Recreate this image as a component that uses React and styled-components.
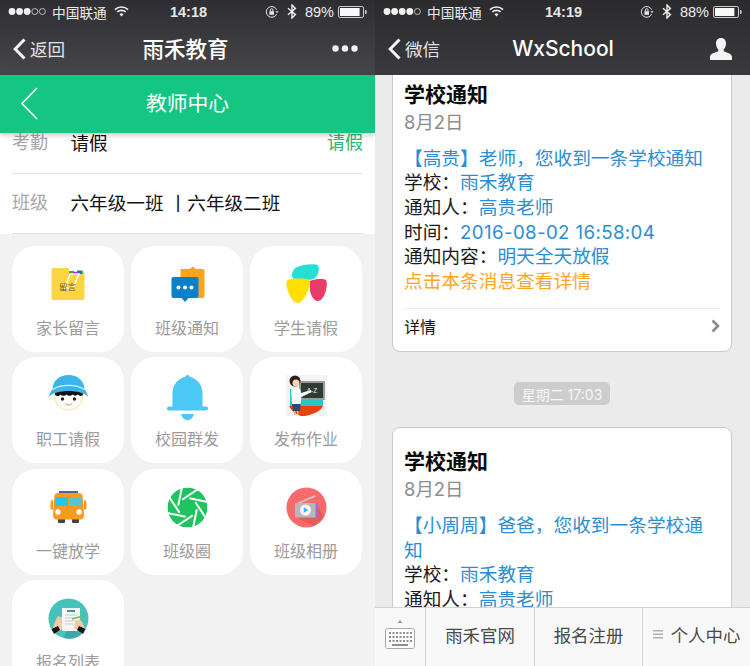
import React from "react";
import styled, { createGlobalStyle } from "styled-components";

const CJK = `"Noto Sans CJK SC", sans-serif`;
const MIXED = `Inter, "Noto Sans CJK SC", sans-serif`;

const GlobalStyle = createGlobalStyle`
  html, body {
    margin: 0;
    padding: 0;
    background: #fff;
  }
  #root {
    width: 750px;
    height: 666px;
    overflow: hidden;
  }
  * {
    box-sizing: border-box;
  }
`;

const Page = styled.div`
  display: grid;
  grid-template-columns: 375px 375px;
  width: 750px;
  height: 666px;
  font-family: ${MIXED};
`;

const Phone = styled.section`
  display: flex;
  flex-direction: column;
  height: 666px;
  overflow: hidden;
  background: ${(p) => p.$bg};
`;

/* ---------- top of the phones ---------- */

const Header = styled.header`
  flex: none;
  height: 75px;
  color: #fff;
  background: linear-gradient(${(p) => p.$from}, ${(p) => p.$to});
`;

const StatusBar = styled.div`
  display: grid;
  grid-template-columns: 1fr auto 1fr;
  align-items: center;
  height: 25px;
  padding: 0 8px 2px;
  color: #eee;
`;

const StatusLeft = styled.div`
  display: flex;
  align-items: center;
`;

const StatusRight = styled.div`
  display: flex;
  align-items: center;
  justify-content: flex-end;
`;

const Carrier = styled.span`
  margin: 0 7px 0 6px;
  font-family: ${CJK};
  font-size: 13.7px;
  line-height: 20px;
`;

const Clock = styled.span`
  margin-left: 2px;
  font-family: "Liberation Sans", sans-serif;
  font-size: 14.5px;
  font-weight: 700;
  color: #e8e8e8;
`;

const Percent = styled.span`
  margin: 0 4px 0 8px;
  font-family: "Liberation Sans", sans-serif;
  font-size: 14.5px;
`;

const NavBar = styled.div`
  display: grid;
  grid-template-columns: 1fr auto 1fr;
  align-items: center;
  height: 50px;
  padding: 0 17px 3px 13px;
`;

const Back = styled.div`
  display: flex;
  align-items: center;
  gap: 4px;
  font-family: ${CJK};
  font-size: 17.6px;
  line-height: 24px;
  color: #e4e4e4;
`;

const NavTitle = styled.div`
  margin: ${(p) => (p.$latin ? "0 0 0 5px" : "0 0 3px 0")};
  font-family: ${(p) => (p.$latin ? `Inter, sans-serif` : CJK)};
  font-size: ${(p) => (p.$latin ? "21px" : "21.5px")};
  font-weight: 500;
  color: #fff;
`;

const NavAction = styled.div`
  display: flex;
  justify-content: flex-end;
`;

/* ---------- teacher centre ---------- */

const GreenBar = styled.div`
  position: relative;
  z-index: 2;
  flex: none;
  display: flex;
  align-items: center;
  justify-content: center;
  height: 58px;
  padding-bottom: 4px;
  font-family: ${CJK};
  font-size: 20.8px;
  color: #fff;
  background: #15c682;
  box-shadow: 0 2px 6px rgba(0, 0, 0, 0.22);
`;

const GreenBack = styled.svg`
  position: absolute;
  left: 20px;
  top: 12px;
`;

const Scroller = styled.div`
  flex: 1;
  min-height: 0;
  overflow: hidden;
`;

const InfoPanel = styled.div`
  margin-top: -19px;
  padding: 0 12px;
  background: #fff;
`;

const InfoRow = styled.div`
  display: flex;
  align-items: center;
  height: 60px;
  padding-bottom: 5px;
  border-bottom: 1px solid #e3e3e3;
  font-family: ${MIXED};
  font-size: 18.6px;
  color: #111;
`;

const InfoLabel = styled.span`
  flex: none;
  width: 58.5px;
  font-size: 18px;
  color: #a6a6a6;
`;

const InfoAction = styled.span`
  margin-left: auto;
  font-size: 18px;
  color: #2cb673;
`;

const TileGrid = styled.div`
  display: grid;
  grid-template-columns: repeat(3, 112px);
  grid-auto-rows: 106px;
  column-gap: 7px;
  row-gap: 5.5px;
  padding: 11.5px 0 0 12px;
`;

const Tile = styled.div`
  display: flex;
  flex-direction: column;
  align-items: center;
  gap: 11px;
  padding-top: 18px;
  border-radius: 24px;
  background: #fff;
`;

const TileIcon = styled.svg`
  flex: none;
  overflow: visible;
`;

const TileLabel = styled.span`
  font-family: ${CJK};
  font-size: 16px;
  line-height: 22px;
  color: #9b9b9b;
`;

/* ---------- message list ---------- */

const Messages = styled.div`
  display: flex;
  flex-direction: column;
  align-items: flex-start;
  padding-left: 17px;
  margin-top: -15px;
`;

const Card = styled.article`
  flex: none;
  width: 340px;
  padding: 19px 11px 0;
  border: 1px solid #c9c9c9;
  border-radius: 8px;
  background: #fff;
`;

const CardTitle = styled.h2`
  margin: 0 0 2px;
  font-family: ${CJK};
  font-size: 21px;
  font-weight: 700;
  line-height: 26px;
  color: #0a0a0a;
`;

const CardDate = styled.div`
  margin-bottom: 10.8px;
  font-size: 18.4px;
  line-height: 28px;
  color: #8c8c8c;
`;

const Line = styled.p`
  margin: 0;
  width: 316px;
  font-size: 18.7px;
  line-height: 24.6px;
  color: ${(p) => p.$color || "#1a1a1a"};
`;

const Blue = styled.span`
  color: #2b8ed2;
  letter-spacing: ${(p) => (p.$wide ? "0.37px" : "0")};
`;

const CardFooter = styled.div`
  display: flex;
  align-items: center;
  justify-content: space-between;
  height: 43px;
  margin-top: 14px;
  padding-bottom: 8px;
  border-top: 1px solid #e8e8e8;
  font-family: ${CJK};
  font-size: 16px;
  color: #111;
`;

const TimePill = styled.div`
  align-self: flex-start;
  display: flex;
  align-items: center;
  justify-content: center;
  width: 96px;
  height: 23px;
  margin: 30px 0 22px 122px;
  border-radius: 5px;
  font-size: 14px;
  color: #f6f6f6;
  background: #cdcdcd;
`;

const MenuBar = styled.nav`
  flex: none;
  display: grid;
  grid-template-columns: 50px 109px 108px 108px;
  height: 59px;
  border-top: 1px solid #d2d2d2;
  background: #f8f8f8;
`;

const MenuCell = styled.div`
  display: flex;
  align-items: center;
  justify-content: center;
  gap: 8px;
  padding-bottom: 5px;
  border-left: ${(p) => (p.$first ? "none" : "1px solid #d4d4d4")};
  font-family: ${CJK};
  font-size: 17.4px;
  color: #4a4a4a;
`;

const MenuLines = styled.svg`
  flex: none;
`;

/* ---------- drawn icons ---------- */

const SignalDots = ({ filled }) => (
  <svg width="38" height="9" viewBox="0 0 38 9">
    {[0, 1, 2, 3, 4].map((i) => (
      <circle
        key={i}
        cx={4 + i * 7.6}
        cy="4.5"
        r={i < filled ? 3.4 : 3}
        fill={i < filled ? "#f2f2f2" : "none"}
        stroke="#dcdcdc"
        strokeWidth={i < filled ? 0 : 0.8}
      />
    ))}
  </svg>
);

const Wifi = () => (
  <svg width="15" height="11" viewBox="0 0 15 11" fill="none" stroke="#f0f0f0" strokeWidth="1.7">
    <path d="M1 3.6a9.4 9.4 0 0 1 13 0" />
    <path d="M3.3 6a6 6 0 0 1 8.4 0" />
    <path d="M7.5 10.6 5.5 8.3a2.8 2.8 0 0 1 4 0z" fill="#f0f0f0" stroke="none" />
  </svg>
);

const RotationLock = () => (
  <svg width="14" height="14" viewBox="0 0 14 14" fill="none" stroke="#e6e6e6" strokeWidth="1">
    <path d="M11.6 9.2A5.4 5.4 0 1 1 11.6 4.6" />
    <path d="M10.5 6.2h3l-1.5 2z" fill="#e6e6e6" stroke="none" />
    <rect x="4.4" y="6.2" width="4.6" height="3.6" fill="#e6e6e6" stroke="none" />
    <path d="M5.4 6.2V5a1.3 1.3 0 0 1 2.6 0v1.2" />
  </svg>
);

const Bluetooth = () => (
  <svg width="10" height="15" viewBox="0 0 10 15" fill="none" stroke="#efefef" strokeWidth="1.4" style={{ marginLeft: 8 }}>
    <path d="M1 4.2 8.4 10.6 5 14V1l3.4 3.4L1 10.8" />
  </svg>
);

const Battery = ({ level }) => (
  <svg width="29" height="12" viewBox="0 0 29 12">
    <rect x="0.5" y="0.5" width="25" height="11" rx="1.6" fill="none" stroke="#cfcfcf" />
    <rect x="2" y="2" width={22 * level} height="8" fill="#f8f8f8" />
    <path d="M27 4h.6a1 1 0 0 1 1 1v2a1 1 0 0 1-1 1H27z" fill="#cfcfcf" />
  </svg>
);

const BackArrow = () => (
  <svg width="13" height="22" viewBox="0 0 13 22" fill="none" stroke="#f4f4f4" strokeWidth="3">
    <path d="M11.5 1.5 2.2 11l9.3 9.5" />
  </svg>
);

const MoreDots = () => (
  <svg width="26" height="7" viewBox="0 0 26 7" fill="#f4f4f4">
    <circle cx="3.5" cy="3.5" r="3.2" />
    <circle cx="13" cy="3.5" r="3.2" />
    <circle cx="22.5" cy="3.5" r="3.2" />
  </svg>
);

const Person = () => (
  <svg width="22" height="22" viewBox="0 0 22 22" fill="#f4f4f4" style={{ marginRight: 1 }}>
    <path d="M11 0c3.3 0 5 2.4 5 5.6 0 2.6-1 4.7-2.3 6v1.7c2.7 1.1 8.3 2.6 8.3 5.5V22H0v-3.2c0-2.9 5.6-4.4 8.3-5.5v-1.7C7 10.3 6 8.2 6 5.6 6 2.4 7.7 0 11 0z" />
  </svg>
);

const Keyboard = () => (
  <svg width="32" height="30" viewBox="0 0 32 30">
    <path d="M16 0l2.5 3h-5z" fill="#9a9a9a" />
    <rect x="1.5" y="8.5" width="29" height="20" rx="2" fill="#fdfdfd" stroke="#a8a8a8" />
    {[12, 16, 20].map((y) =>
      [5, 8.5, 12, 15.5, 19, 22.5, 26].map((x) => (
        <rect key={`${x}-${y}`} x={x} y={y} width="2" height="2" fill="#8f8f8f" />
      ))
    )}
    <rect x="8" y="24" width="16" height="2" fill="#8f8f8f" />
  </svg>
);

const NoteIcon = () => (
  <>
    <path d="M5.5 4h14c1 0 1.500.6 1.500 1.500V7.500h14c1 0 1.500.7 1.500 1.500v25c0 1.200-.8 2-2 2H5.500c-1.200 0-2-.8-2-2V6c0-1.200.8-2 2-2z" fill="#fbd545" />
    <path d="M21 7h5v3h-5z" fill="#35b34a" />
    <path d="M25 8h5v3h-5z" fill="#e018c8" />
    <path d="M29 6.500h5.500V10H29z" fill="#1c6fd6" />
    <path d="M22 10h9l-6 14h-8z" fill="none" stroke="#fff" strokeWidth="1.4" />
    <text x="19.5" y="26" fontSize="8.5" textAnchor="middle" fill="#6b5a1a" fontFamily={CJK}>
      留言
    </text>
  </>
);

const BubbleIcon = () => (
  <>
    <path d="M13.5 5h9l3.500-2.500L29 5h6.500c1.200 0 2 .8 2 2v25c0 1.200-.8 2-2 2h-22z" fill="#ffa41c" />
    <path d="M6.5 13h23c1.200 0 2 .8 2 2v17c0 1.200-.8 2-2 2H21.500L18 38l-3.500-4h-8c-1.200 0-2-.8-2-2V15c0-1.200.8-2 2-2z" fill="#0a80c8" />
    <circle cx="11.5" cy="23.5" r="2" fill="#fff" />
    <circle cx="18" cy="23.5" r="2" fill="#fff" />
    <circle cx="24.5" cy="23.5" r="2" fill="#fff" />
  </>
);

const BlobsIcon = () => (
  <>
    <path d="M10 3.500C16 .5 25-.5 30 .5c3 .6 3.200 4 2.300 7.500-.8 3.500-2.800 7-7 7.500-4 .5-11 .5-14.500 0-3.500-.5-5-1.800-4.800-4.500.2-3 1.500-5.900 4-7.500z" fill="#23e0d4" />
    <path d="M24 17c5-2 11-2.500 15-1.500 2 .8 2 4 1.500 8-.8 5-3.500 13-8.500 13.500-4.500.3-7-6-8-10z" fill="#ea3b68" />
    <path d="M3 15.500c6-1.200 15-1.200 19.500 0 2 .7 2 4 .5 8-1.800 5-5.500 15-11 15.500C6.500 39.500 2.500 30 .8 23 0 19.500 0 16.500 3 15.500z" fill="#ffdf00" />
  </>
);

const WorkerIcon = () => (
  <>
    <circle cx="20.5" cy="21" r="14.500" fill="#fde6a0" />
    <circle cx="20.5" cy="21" r="13.500" fill="#fff" />
    <path d="M7 15h27l1 5c-2 1.500-4 1-5-.5-1.500 1.500-4 1.500-5.500 0-1.500 1.700-4.500 1.700-6 0-1.500 1.800-4.500 1.800-6 0-1.500 2-3.500 2-5.500.5z" fill="#111" />
    <path d="M4.500 14C5 5 12 0 20.500 0s15.500 5 16 14c1.500 2 3 5 4 8C33 14 8 14 .5 22c1-3 2.500-6 4-8z" fill="#3cb5ea" />
    <path d="M4.500 14.500c8-5.500 24-5.500 32 0" fill="none" stroke="#d6f1fc" strokeWidth="1.2" />
    <circle cx="14.5" cy="24" r="1.700" fill="#222" />
    <circle cx="26.5" cy="24" r="1.700" fill="#222" />
    <path d="M17 28.500c2 2 5 2 7 0" fill="none" stroke="#999" strokeWidth="1" />
  </>
);

const BellIcon = () => (
  <>
    <path d="M20.5 0c1.200 0 2 .8 2.200 1.700C29 3.300 35.500 9 35.500 18v13.500h3.500c1.200 0 2 .9 2 2s-.8 2-2 2H2c-1.200 0-2-.9-2-2s.8-2 2-2h3.500V18C5.500 9 12 3.300 18.300 1.700 18.500.8 19.300 0 20.500 0z" fill="#4cc8f4" />
    <path d="M14 39h13c-1 3.500-3 6-6.500 6S15 42.500 14 39z" fill="#4cc8f4" />
  </>
);

const TeacherIcon = () => (
  <>
    <rect x="0" y="0" width="41" height="41" fill="#f4f4f4" />
    <path d="M4 14h33v17H4z" fill="#2ec4c6" />
    <rect x="13" y="6" width="26" height="19" rx="1" fill="#9a9a9a" />
    <rect x="15" y="8" width="22" height="15" fill="#2e3a36" />
    <text x="26" y="18" fontSize="6.5" textAnchor="middle" fill="#e8e8c8" fontFamily="Liberation Sans, sans-serif">
      A-Z
    </text>
    <path d="M3 31h34c-2 5-9 8-18 10h-4C9 39 5 35 3 31z" fill="#e8430f" />
    <circle cx="9" cy="6" r="5.500" fill="#2a2020" />
    <circle cx="10" cy="8" r="3.500" fill="#f6d3b3" />
    <path d="M5 14c3-2 6-2 9 0l1 4 10-3 .5 2-10 5-1 7H6z" fill="#f6fbfb" />
    <path d="M6 29h8.500l-.5 7H7z" fill="#2c4a6b" />
    <path d="M8 36h1.500v4H8zM11 36h1.500v4H11z" fill="#f3b58c" />
  </>
);

const BusIcon = () => (
  <>
    <path d="M5 13c-1.500 0-2.500 1-2.500 2.500v5c0 1.500 1 2.500 2.500 2.500zM36 13c1.500 0 2.500 1 2.500 2.500v5c0 1.500-1 2.500-2.500 2.500z" fill="#fb9a1c" />
    <rect x="11" y="4" width="19" height="3" fill="#5a5fa0" />
    <rect x="10" y="31" width="7" height="5" rx="1" fill="#444" />
    <rect x="24" y="31" width="7" height="5" rx="1" fill="#444" />
    <path d="M10 6h21c2 0 3.500 1.500 3.700 3.500l1.300 19c0 2.200-1.500 4-3.500 4h-24c-2 0-3.500-1.800-3.500-4l1.300-19C6.500 7.500 8 6 10 6z" fill="#fb9a1c" />
    <path d="M8 10h12v9H6.800z" fill="#1fc7f2" />
    <path d="M21 10h12l1.200 9H21z" fill="#52c6d8" />
    <circle cx="10" cy="25" r="2.700" fill="#fff" />
    <circle cx="31" cy="25" r="2.700" fill="#fff" />
  </>
);

const ApertureIcon = () => (
  <>
    <circle cx="20.5" cy="20.5" r="20" fill="#1fc35f" />
    {[0, 1, 2, 3, 4, 5, 6, 7].map((i) => {
      const a = (i * Math.PI) / 4 + 0.2;
      const t = a + Math.PI / 2;
      const x = 20.5 + 9.5 * Math.cos(a);
      const y = 20.5 + 9.5 * Math.sin(a);
      return (
        <line
          key={i}
          x1={x}
          y1={y}
          x2={x + 20 * Math.cos(t)}
          y2={y + 20 * Math.sin(t)}
          stroke="#fff"
          strokeWidth="2"
        />
      );
    })}
    <circle cx="20.5" cy="20.5" r="7.500" fill="#1fc35f" />
    <circle cx="20.5" cy="20.5" r="21.500" fill="none" stroke="#fff" strokeWidth="3" />
  </>
);

const RadioIcon = () => (
  <>
    <circle cx="20.5" cy="20.5" r="20" fill="#f96a6a" />
    <path d="M30 16 38 30 28 39 9 30z" fill="#e25c5c" />
    <path d="M11 16 29 8l.8 1.400L15 16z" fill="#c9c9c9" />
    <rect x="9" y="16" width="21" height="14.500" fill="#b8b8b8" />
    <rect x="29.5" y="16" width="2" height="14.500" fill="#9a6cf0" />
    <circle cx="19.5" cy="23" r="5.500" fill="#f6f6f6" />
    <path d="M17.800 20.300v5.400l4.300-2.700z" fill="#29b6f6" />
  </>
);

const FormIcon = () => (
  <>
    <circle cx="20.5" cy="20.5" r="20" fill="#46c1bc" />
    <path d="M20 30 34 36a20 20 0 0 1-18 4z" fill="#3aa9a5" />
    <path d="M5 30c1-5 3-9 5-12l5 2 1 10-5 3z" fill="#f3c9a8" />
    <rect x="14" y="10" width="18" height="23" fill="#f6f6f6" />
    <rect x="19" y="12" width="8" height="2" fill="#3d9a96" />
    <path d="M17 17h12M17 20h10M17 23h12M17 26h8" stroke="#c8c8c8" strokeWidth="1" />
    <path d="M24 21l11-3" stroke="#6fc04a" strokeWidth="1.6" />
    <path d="M37 31c-1-4-3-8-6-10l-4 3-1 6 4 3z" fill="#f3c9a8" />
    <path d="M3.500 31 10 28l2 4-6 4zM37.500 31 31 28l-2 4 6 4z" fill="#161616" />
  </>
);

const tiles = [
  ["家长留言", NoteIcon],
  ["班级通知", BubbleIcon],
  ["学生请假", BlobsIcon],
  ["职工请假", WorkerIcon],
  ["校园群发", BellIcon],
  ["发布作业", TeacherIcon],
  ["一键放学", BusIcon],
  ["班级圈", ApertureIcon],
  ["班级相册", RadioIcon],
  ["报名列表", FormIcon],
];

const Status = ({ filled, time, level, percent }) => (
  <StatusBar>
    <StatusLeft>
      <SignalDots filled={filled} />
      <Carrier>中国联通</Carrier>
      <Wifi />
    </StatusLeft>
    <Clock>{time}</Clock>
    <StatusRight>
      <RotationLock />
      <Bluetooth />
      <Percent>{percent}</Percent>
      <Battery level={level} />
    </StatusRight>
  </StatusBar>
);

export default function App() {
  return (
    <Page>
      <GlobalStyle />
      <Phone $bg="#f2f2f2">
        <Header $from="#2e2d31" $to="#47464b">
          <Status filled={3} time="14:18" level={0.89} percent="89%" />
          <NavBar>
            <Back>
              <BackArrow />
              返回
            </Back>
            <NavTitle>雨禾教育</NavTitle>
            <NavAction>
              <MoreDots />
            </NavAction>
          </NavBar>
        </Header>
        <GreenBar>
          <GreenBack width="18" height="33" viewBox="0 0 18 33" fill="none" stroke="#fff" strokeWidth="1.6">
            <path d="M17 1 2 16.5 17 32" />
          </GreenBack>
          教师中心
        </GreenBar>
        <Scroller>
          <InfoPanel>
            <InfoRow>
              <InfoLabel>考勤</InfoLabel>
              请假
              <InfoAction>请假</InfoAction>
            </InfoRow>
            <InfoRow>
              <InfoLabel>班级</InfoLabel>
              六年级一班 丨六年级二班
            </InfoRow>
          </InfoPanel>
          <TileGrid>
            {tiles.map(([label, Icon]) => (
              <Tile key={label}>
                <TileIcon width="41" height="41" viewBox="0 0 41 41">
                  <Icon />
                </TileIcon>
                <TileLabel>{label}</TileLabel>
              </Tile>
            ))}
          </TileGrid>
        </Scroller>
      </Phone>

      <Phone $bg="#ebebeb">
        <Header $from="#2b2a2d" $to="#3a393d">
          <Status filled={4} time="14:19" level={0.88} percent="88%" />
          <NavBar>
            <Back>
              <BackArrow />
              微信
            </Back>
            <NavTitle $latin>WxSchool</NavTitle>
            <NavAction>
              <Person />
            </NavAction>
          </NavBar>
        </Header>
        <Scroller>
          <Messages>
            <Card>
              <CardTitle>学校通知</CardTitle>
              <CardDate>8月2日</CardDate>
              <Line $color="#2b8ed2">【高贵】老师，您收到一条学校通知</Line>
              <Line>学校：<Blue>雨禾教育</Blue></Line>
              <Line>通知人：<Blue>高贵老师</Blue></Line>
              <Line>时间：<Blue $wide>2016-08-02 16:58:04</Blue></Line>
              <Line>通知内容：<Blue>明天全天放假</Blue></Line>
              <Line $color="#ffa526">点击本条消息查看详情</Line>
              <CardFooter>
                详情
                <svg width="9" height="14" viewBox="0 0 9 14" fill="none" stroke="#8a8a8a" strokeWidth="2.6">
                  <path d="M1.5 1.5 7 7l-5.5 5.5" />
                </svg>
              </CardFooter>
            </Card>
            <TimePill>星期二 17:03</TimePill>
            <Card>
              <CardTitle>学校通知</CardTitle>
              <CardDate>8月2日</CardDate>
              <Line $color="#2b8ed2">【小周周】爸爸，您收到一条学校通知</Line>
              <Line>学校：<Blue>雨禾教育</Blue></Line>
              <Line>通知人：<Blue>高贵老师</Blue></Line>
            </Card>
          </Messages>
        </Scroller>
        <MenuBar>
          <MenuCell $first>
            <Keyboard />
          </MenuCell>
          <MenuCell>雨禾官网</MenuCell>
          <MenuCell>报名注册</MenuCell>
          <MenuCell>
            <MenuLines width="10" height="9" viewBox="0 0 10 9" fill="#b0b0b0">
              <rect width="10" height="1.5" />
              <rect y="3.5" width="10" height="1.5" />
              <rect y="7" width="10" height="1.5" />
            </MenuLines>
            个人中心
          </MenuCell>
        </MenuBar>
      </Phone>
    </Page>
  );
}
